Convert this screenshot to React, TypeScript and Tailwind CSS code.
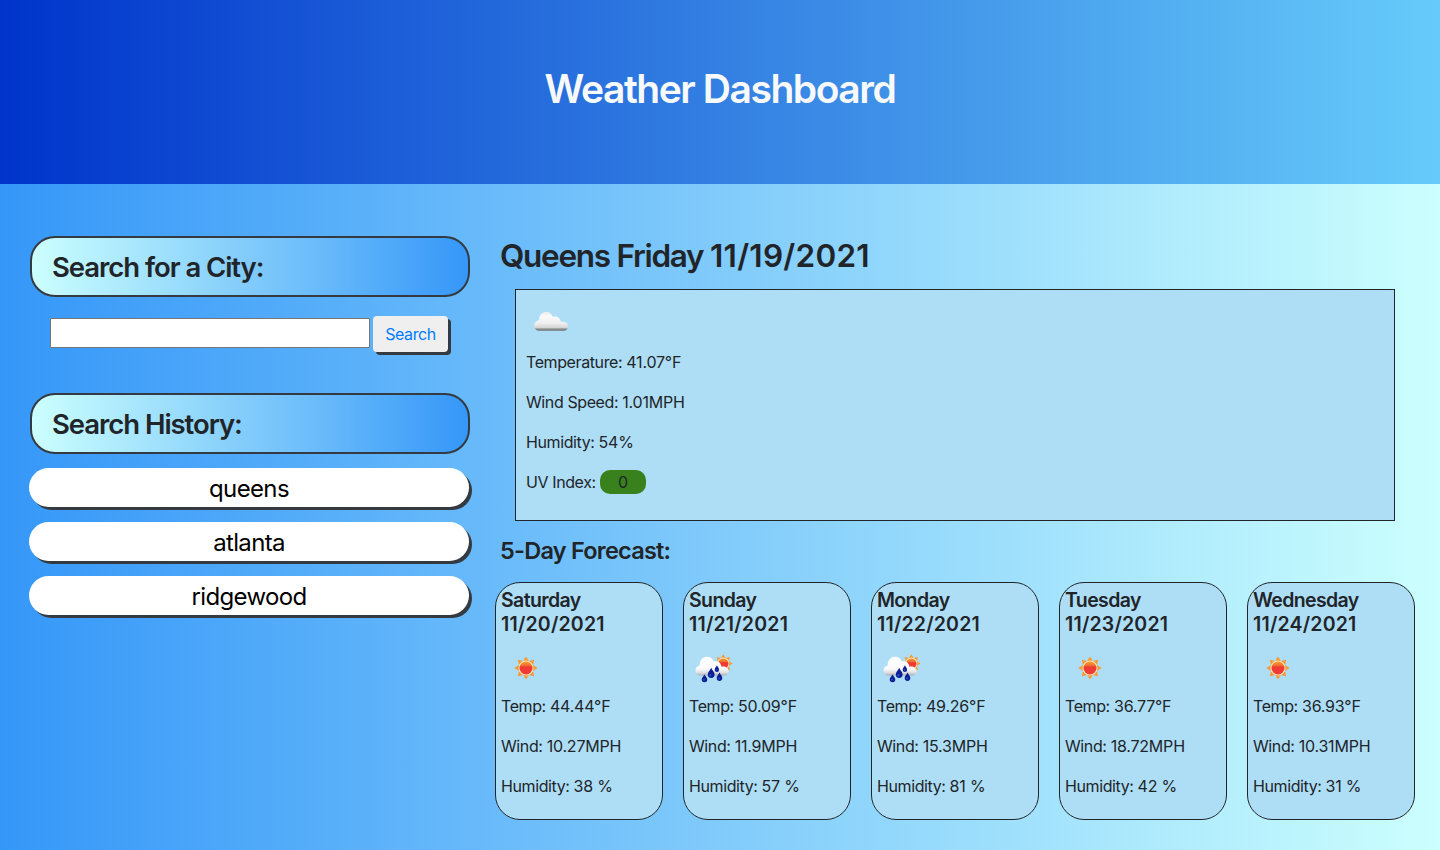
import type { ReactNode } from "react";

const RAYS = [0, 45, 90, 135, 180, 225, 270, 315];

function SunShape({ id }: { id: string }) {
  return (
    <g>
      <defs>
        <linearGradient id={id} x1="0" y1="0" x2="0" y2="1">
          <stop offset="0" stopColor="#f7a030" />
          <stop offset="0.3" stopColor="#f0702f" />
          <stop offset="0.42" stopColor="#ee3a32" />
          <stop offset="1" stopColor="#f03c36" />
        </linearGradient>
      </defs>
      {RAYS.map((a) => (
        <path
          key={a}
          d="M-2.9-7L0-11.6L2.9-7Z"
          fill="#f49a38"
          transform={`rotate(${a})`}
        />
      ))}
      <circle r="7.5" fill="#fbe3b8" />
      <circle r="6.5" fill={`url(#${id})`} />
    </g>
  );
}

function SunIcon({ id }: { id: string }) {
  return (
    <svg width="50" height="50" viewBox="-25 -25 50 50">
      <SunShape id={id} />
    </svg>
  );
}

function CloudIcon() {
  return (
    <svg width="50" height="50" viewBox="0 0 50 50">
      <defs>
        <linearGradient id="cloudFill" x1="0" y1="15.5" x2="0" y2="35" gradientUnits="userSpaceOnUse">
          <stop offset="0" stopColor="#e9e9e9" />
          <stop offset="0.25" stopColor="#fafafa" />
          <stop offset="0.6" stopColor="#f0f0f0" />
          <stop offset="0.83" stopColor="#d4d4d4" />
          <stop offset="0.9" stopColor="#8a8d8d" />
          <stop offset="1" stopColor="#6f7373" />
        </linearGradient>
      </defs>
      <path
        d="M12.2 34.7C9.4 34.2 7.9 31.7 8 29.3C8.2 26.8 10.2 24.6 13 24.2C13 19.4 16 15.8 20 15.8C23.2 15.8 25.6 17.6 26.9 20.9C30.7 19.7 34.4 21.8 35 26C38.8 25.2 42 27.2 42.1 30.5C42 32.8 40.7 34.3 38.5 34.7Z"
        fill="url(#cloudFill)"
      />
    </svg>
  );
}

function RainIcon({ id }: { id: string }) {
  return (
    <svg width="50" height="50" viewBox="0 0 50 50">
      <defs>
        <linearGradient id={id + "c"} x1="0" y1="13" x2="0" y2="33" gradientUnits="userSpaceOnUse">
          <stop offset="0" stopColor="#ffffff" />
          <stop offset="0.65" stopColor="#fafafc" />
          <stop offset="0.85" stopColor="#d9dadd" />
          <stop offset="1" stopColor="#9ea2a8" />
        </linearGradient>
      </defs>
      <g transform="translate(34.3 20.6) scale(0.8)">
        <SunShape id={id + "s"} />
      </g>
      <path
        d="M11 32.6C8 32 6.4 29.8 6.5 27.2C6.6 24.6 8.4 22.8 10.7 22.4C10.5 17.2 13.5 13.7 17.8 13.7C21.4 13.7 23.8 15.5 24.7 18.4C28.9 17.4 32 19.6 32.4 23.7C36.4 22.9 39.6 25 39.6 28.2C39.5 30.9 37.9 32.3 35.8 32.6Z"
        fill={`url(#${id}c)`}
      />
      <g fill="#0c1f94">
        <path d="M22.2 24.8C23.4 27.6 25.6 29 25.6 31.5A3.4 3.4 0 0 1 18.8 31.5C18.8 29 21 27.6 22.2 24.8Z" />
        <path d="M27.9 22.2C28.7 24 30.1 25 30.1 26.7A2.2 2.2 0 0 1 25.7 26.7C25.7 25 27.1 24 27.9 22.2Z" />
        <path d="M15.5 31.4C16.4 33.4 18.3 34.4 18.3 36.5A2.8 2.8 0 0 1 12.7 36.5C12.7 34.4 14.6 33.4 15.5 31.4Z" />
        <path d="M30.5 29.6C31.4 31.8 33.3 33 33.3 35.1A2.8 2.8 0 0 1 27.7 35.1C27.7 33 29.6 31.8 30.5 29.6Z" />
      </g>
      <g fill="#3458e0">
        <circle cx="21.3" cy="32.2" r="1" />
        <circle cx="27.6" cy="27" r="0.7" />
        <circle cx="15" cy="36.8" r="0.8" />
        <circle cx="30" cy="35.4" r="0.8" />
      </g>
    </svg>
  );
}

function PanelTitle({ children }: { children: ReactNode }) {
  return (
    <div className="flex h-[61px] items-center rounded-[25px] border-2 border-[#343a40] bg-[linear-gradient(to_right,#ccfffe,#3597f8)] pl-5 pt-[2px] text-[27.5px] font-semibold tracking-[-1.05px]">
      {children}
    </div>
  );
}

function Reading({ label, value }: { label: string; value: string }) {
  return (
    <p className="mb-4 whitespace-pre leading-6">
      <span className="tracking-[-0.4px]">{label} </span>
      <span className="tracking-[-0.2px]">{value}</span>
    </p>
  );
}

const HISTORY = ["queens", "atlanta", "ridgewood"];

const FORECAST = [
  { day: "Saturday", date: "11/20/2021", icon: "sun", temp: "44.44", wind: "10.27", humidity: "38" },
  { day: "Sunday", date: "11/21/2021", icon: "rain", temp: "50.09", wind: "11.9", humidity: "57" },
  { day: "Monday", date: "11/22/2021", icon: "rain", temp: "49.26", wind: "15.3", humidity: "81" },
  { day: "Tuesday", date: "11/23/2021", icon: "sun", temp: "36.77", wind: "18.72", humidity: "42" },
  { day: "Wednesday", date: "11/24/2021", icon: "sun", temp: "36.93", wind: "10.31", humidity: "31" },
];

export default function App() {
  return (
    <div className="flex h-[850px] w-[1440px] flex-col overflow-hidden bg-[linear-gradient(to_right,#3597f8,#ccfffe)] font-['Inter',sans-serif] text-base text-[#212529]">
      <header className="flex h-[184px] shrink-0 justify-center bg-[linear-gradient(to_right,#0034cb,#66cbfa)] pt-[65px]">
        <h1 className="text-[39px] font-semibold leading-[48px] tracking-[-1.45px] text-[#f8f9fa]">Weather Dashboard</h1>
      </header>
      <div className="flex flex-1">
        <aside className="w-[470px] pl-[30px] pt-[52px]">
          <PanelTitle>Search for a City:</PanelTitle>
          <div className="mt-[19px] flex items-start gap-[3px] pl-5">
            <input className="mt-[2px] h-[30px] w-80 rounded-[1px] border border-[#767676] bg-white px-1 outline-none" />
            <button className="h-9 w-[75px] rounded-[4px] bg-[#efefef] tracking-[-0.4px] text-[#007bff] shadow-[3px_3px_0_#343a40]">
              Search
            </button>
          </div>
          <div className="mt-[41px]">
            <PanelTitle>Search History:</PanelTitle>
          </div>
          <div className="-ml-px mt-[14px] flex flex-col gap-[15px]">
            {HISTORY.map((city) => (
              <button
                key={city}
                className="h-[39px] w-[440px] rounded-[20px] bg-white pt-[3px] text-2xl leading-9 tracking-[-0.65px] text-black shadow-[3px_3px_0_#343a40]"
              >
                {city}
              </button>
            ))}
          </div>
        </aside>
        <main className="flex-1 pl-[25px] pr-[25px] pt-[53px]">
          <h2 className="whitespace-pre pl-[5px] text-[31.5px] font-semibold leading-[38px]">
            <span className="tracking-[-1.28px]">Queens Friday </span>
            <span className="tracking-[0.25px]">11/19/2021</span>
          </h2>
          <section className="ml-5 mr-5 mt-[14px] h-[232px] border border-[#212529] bg-[#aedef6] pl-[10px] pt-[6px]">
            <div className="mb-[4px] h-[50px]">
              <CloudIcon />
            </div>
            <Reading label="Temperature:" value="41.07°F" />
            <Reading label="Wind Speed:" value="1.01MPH" />
            <Reading label="Humidity:" value="54%" />
            <p className="flex items-center leading-6">
              <span className="w-[74px] tracking-[-0.4px]">UV Index:</span>
              <span className="h-6 w-[46px] rounded-[10px] bg-[#38811c] text-center">0</span>
            </p>
          </section>
          <h3 className="mb-[17px] mt-[15px] pl-[5px] text-[23.5px] font-semibold leading-[29px] tracking-[-0.76px]">5-Day Forecast:</h3>
          <div className="grid grid-cols-5 gap-5">
            {FORECAST.map((f) => (
              <article key={f.day} className="h-[238px] rounded-[25px] border border-[#212529] bg-[#aedef6] pl-[5px] pt-[5px]">
                <h5 className="text-[19.5px] font-semibold leading-6">
                  <span className="block tracking-[-0.62px]">{f.day}</span>
                  <span className="block tracking-[0.2px]">{f.date}</span>
                </h5>
                <div className="mb-[1px] mt-[7px] h-[50px]">
                  {f.icon === "sun" ? <SunIcon id={f.day} /> : <RainIcon id={f.day} />}
                </div>
                <Reading label="Temp:" value={f.temp + "°F"} />
                <Reading label="Wind:" value={f.wind + "MPH"} />
                <Reading label="Humidity:" value={f.humidity + " %"} />
              </article>
            ))}
          </div>
        </main>
      </div>
    </div>
  );
}
